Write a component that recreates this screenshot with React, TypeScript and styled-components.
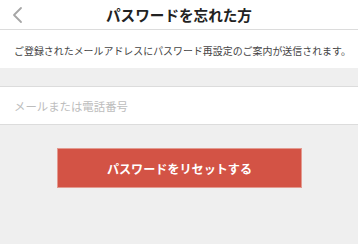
import React from "react";
import styled, { createGlobalStyle } from "styled-components";

const Global = createGlobalStyle`
  html, body { margin: 0; padding: 0; background: #efefef; }
  body { font-family: "Noto Sans CJK JP", "Noto Sans", sans-serif; }
  * { box-sizing: border-box; }
`;

const Page = styled.div`
  width: 358px;
  height: 244px;
  background: #efefef;
  display: flex;
  flex-direction: column;
  overflow: hidden;
`;

const Header = styled.header`
  height: 30px;
  background: #fff;
  border-bottom: 1px solid #dcdcdc;
  display: grid;
  grid-template-columns: 40px 1fr 40px;
  align-items: center;
`;

const BackButton = styled.button`
  border: none;
  background: none;
  padding: 0 0 0 11px;
  height: 29px;
  display: flex;
  align-items: center;
  cursor: pointer;
`;

const Title = styled.h1`
  margin: 0;
  font-size: 14.6px;
  font-weight: 700;
  color: #222;
  text-align: center;
  line-height: 28px;
`;

const Notice = styled.div`
  background: #fff;
  height: 38px;
  padding: 2px 14px 0;
  display: flex;
  align-items: center;
  font-size: 9.95px;
  color: #444;
  white-space: nowrap;
`;

const Gap = styled.div<{ $h: number }>`
  height: ${(p) => p.$h}px;
  flex-shrink: 0;
`;

const InputRow = styled.div`
  background: #fff;
  border-top: 1px solid #dcdcdc;
  border-bottom: 1px solid #dcdcdc;
  height: 39px;
  display: flex;
  align-items: center;
`;

const Input = styled.input`
  border: none;
  outline: none;
  width: 100%;
  height: 100%;
  padding: 0 14px;
  background: transparent;
  font-family: "Noto Sans CJK JP", "Noto Sans", sans-serif;
  font-size: 11.4px;
  color: #333;
  &::placeholder { color: #bdbdbd; }
`;

const Actions = styled.div`
  display: flex;
  justify-content: center;
`;

const ResetButton = styled.button`
  width: 245px;
  height: 40px;
  background: #d35345;
  border: 1px solid #e39a90;
  color: #fff;
  font-family: "Noto Sans CJK JP", "Noto Sans", sans-serif;
  font-size: 12.1px;
  font-weight: 700;
  cursor: pointer;
  margin-left: 1px;
`;

export default function App() {
  return (
    <Page>
      <Global />
      <Header>
        <BackButton aria-label="戻る">
          <svg width="12" height="18" viewBox="0 0 12 18" fill="none">
            <path d="M10 2 L3 9 L10 16" stroke="#a6a6a6" strokeWidth="1.8" strokeLinecap="round" strokeLinejoin="round" />
          </svg>
        </BackButton>
        <Title>パスワードを忘れた方</Title>
        <span />
      </Header>
      <Notice>ご登録されたメールアドレスにパスワード再設定のご案内が送信されます。</Notice>
      <Gap $h={18} />
      <InputRow>
        <Input placeholder="メールまたは電話番号" />
      </InputRow>
      <Gap $h={23} />
      <Actions>
        <ResetButton>パスワードをリセットする</ResetButton>
      </Actions>
    </Page>
  );
}
